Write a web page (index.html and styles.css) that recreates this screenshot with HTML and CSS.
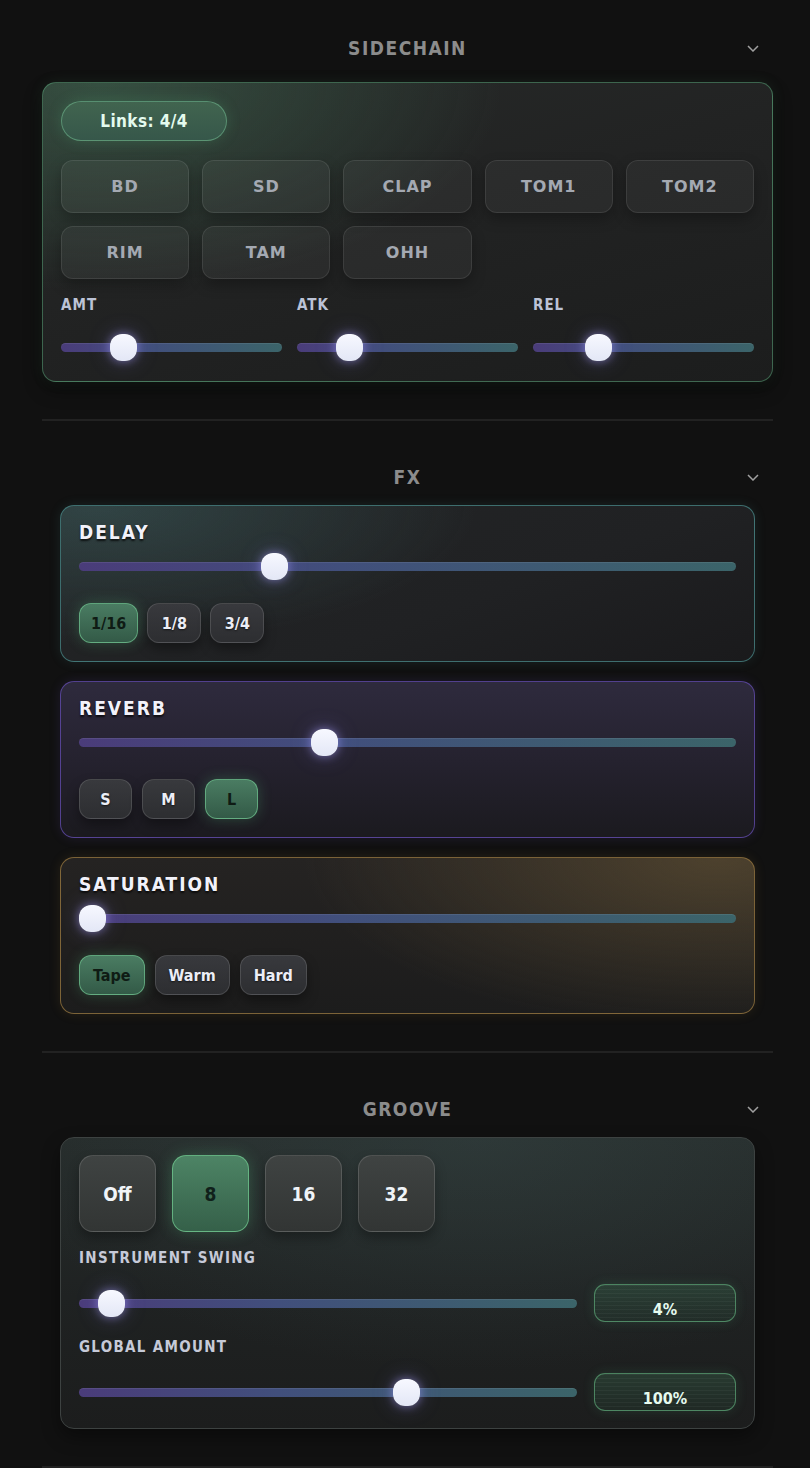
FILE: index.html
```html
<!DOCTYPE html>
<html>
<head>
<meta charset="utf-8">
<link rel="stylesheet" href="styles.css">
</head>
<body>
<div class="page">

  <section class="section first">
    <header class="sec-head">
      <span></span>
      <h2 class="sec-title">SIDECHAIN</h2>
      <svg class="chev" width="12" height="7" viewBox="0 0 12 7"><polyline points="1,1 6,6 11,1" fill="none" stroke="#a0a0a0" stroke-width="1.5"/></svg>
    </header>
    <div class="panel sidechain">
      <div class="links">Links: 4/4</div>
      <div class="pad-grid">
        <button class="pad">BD</button>
        <button class="pad">SD</button>
        <button class="pad">CLAP</button>
        <button class="pad">TOM1</button>
        <button class="pad">TOM2</button>
        <button class="pad">RIM</button>
        <button class="pad">TAM</button>
        <button class="pad">OHH</button>
      </div>
      <div class="sc-sliders">
        <div class="sc-col">
          <div class="lbl">AMT</div>
          <div class="slider sc"><div class="track"></div><div class="thumb" style="--v:0.25"></div></div>
        </div>
        <div class="sc-col">
          <div class="lbl">ATK</div>
          <div class="slider sc"><div class="track"></div><div class="thumb" style="--v:0.2"></div></div>
        </div>
        <div class="sc-col">
          <div class="lbl">REL</div>
          <div class="slider sc"><div class="track"></div><div class="thumb" style="--v:0.27"></div></div>
        </div>
      </div>
    </div>
  </section>

  <section class="section">
    <header class="sec-head">
      <span></span>
      <h2 class="sec-title">FX</h2>
      <svg class="chev" width="12" height="7" viewBox="0 0 12 7"><polyline points="1,1 6,6 11,1" fill="none" stroke="#a0a0a0" stroke-width="1.5"/></svg>
    </header>
    <div class="cards">
      <div class="card delay">
        <div class="card-title">DELAY</div>
        <div class="slider fx"><div class="track"></div><div class="thumb" style="--v:0.289"></div></div>
        <div class="opts">
          <button class="opt on">1/16</button>
          <button class="opt">1/8</button>
          <button class="opt">3/4</button>
        </div>
      </div>
      <div class="card reverb">
        <div class="card-title">REVERB</div>
        <div class="slider fx"><div class="track"></div><div class="thumb" style="--v:0.368"></div></div>
        <div class="opts">
          <button class="opt sq">S</button>
          <button class="opt sq">M</button>
          <button class="opt sq on">L</button>
        </div>
      </div>
      <div class="card saturation">
        <div class="card-title">SATURATION</div>
        <div class="slider fx"><div class="track"></div><div class="thumb" style="--v:0"></div></div>
        <div class="opts">
          <button class="opt on">Tape</button>
          <button class="opt">Warm</button>
          <button class="opt">Hard</button>
        </div>
      </div>
    </div>
  </section>

  <section class="section">
    <header class="sec-head">
      <span></span>
      <h2 class="sec-title">GROOVE</h2>
      <svg class="chev" width="12" height="7" viewBox="0 0 12 7"><polyline points="1,1 6,6 11,1" fill="none" stroke="#a0a0a0" stroke-width="1.5"/></svg>
    </header>
    <div class="cards">
      <div class="card groove">
        <div class="grid-btns">
          <button class="gbtn">Off</button>
          <button class="gbtn on">8</button>
          <button class="gbtn">16</button>
          <button class="gbtn">32</button>
        </div>
        <div class="glbl first-lbl">INSTRUMENT SWING</div>
        <div class="grow-row">
          <div class="slider gr"><div class="track"></div><div class="thumb" style="--v:0.04"></div></div>
          <div class="value">4%</div>
        </div>
        <div class="glbl">GLOBAL AMOUNT</div>
        <div class="grow-row">
          <div class="slider gr"><div class="track"></div><div class="thumb" style="--v:0.667"></div></div>
          <div class="value">100%</div>
        </div>
      </div>
    </div>
  </section>

</div>
</body>
</html>
```
FILE: styles.css
```css
* { box-sizing: border-box; }

body {
  margin: 0;
  background: #111111;
  font-family: "DejaVu Sans Condensed", "DejaVu Sans", sans-serif;
  font-stretch: condensed;
  color: #e8e8f0;
}

button {
  font-family: inherit;
  font-stretch: inherit;
  cursor: pointer;
  padding: 0;
}

.page {
  width: 731px;
  margin-left: 42px;
}

.section {
  border-bottom: 2px solid #222222;
  padding: 44px 0 37px;
}

.section.first {
  padding-top: 36px;
}

.sec-head {
  height: 24px;
  display: grid;
  grid-template-columns: 1fr auto 1fr;
  align-items: center;
  margin-bottom: 16px;
}

.section.first .sec-head {
  margin-bottom: 22px;
}

.sec-title {
  margin: 0;
  font-size: 19px;
  line-height: 24px;
  font-weight: 700;
  letter-spacing: 1.5px;
  color: #8c8c8c;
}

.chev {
  justify-self: end;
  margin-right: 14px;
}

/* ---------- panels ---------- */

.panel {
  border-radius: 14px;
  border: 1px solid rgba(88, 160, 118, 0.55);
}

.sidechain {
  padding: 18px 18px 20px;
  background:
    radial-gradient(ellipse 55% 70% at 8% 0%, rgba(78, 140, 104, 0.38), rgba(78, 140, 104, 0) 100%),
    linear-gradient(165deg, #272a29 0%, #222323 45%, #1c1d1d 100%);
  box-shadow: 0 0 14px rgba(70, 150, 100, 0.12), 0 8px 18px rgba(0, 0, 0, 0.4);
}

.links {
  width: 166px;
  height: 40px;
  border-radius: 20px;
  border: 1px solid rgba(110, 180, 140, 0.6);
  background: linear-gradient(180deg, #41644f 0%, #36574a 100%);
  box-shadow: 0 0 14px rgba(80, 170, 120, 0.25);
  display: flex;
  align-items: center;
  justify-content: center;
  font-size: 17px;
  font-weight: 700;
  color: #e4fbee;
  letter-spacing: 0.4px;
}

.pad-grid {
  margin-top: 19px;
  display: grid;
  grid-template-columns: repeat(5, 1fr);
  grid-auto-rows: 53px;
  gap: 13px;
}

.pad {
  border-radius: 12px;
  border: 1px solid rgba(255, 255, 255, 0.09);
  background: rgba(255, 255, 255, 0.045);
  box-shadow: 0 6px 14px rgba(0, 0, 0, 0.28);
  font-family: "DejaVu Sans", sans-serif;
  font-stretch: normal;
  font-weight: 700;
  font-size: 16px;
  letter-spacing: 1px;
  color: #a4a9b2;
}

.sc-sliders {
  margin-top: 18px;
  display: grid;
  grid-template-columns: repeat(3, 1fr);
  gap: 15px;
}

.lbl {
  font-size: 15px;
  line-height: 16px;
  font-weight: 700;
  letter-spacing: 1px;
  color: #bcc3d6;
}

.slider.sc {
  margin-top: 21px;
}

/* ---------- slider ---------- */

.slider {
  position: relative;
  height: 27px;
  display: flex;
  align-items: center;
}

.track {
  flex: 1;
  height: 9px;
  border-radius: 5px;
  background: linear-gradient(90deg, #4a3c7a 0%, #414f7c 40%, #3b6469 100%);
  box-shadow: inset 0 1px 0 rgba(255, 255, 255, 0.08);
}

.thumb {
  position: absolute;
  top: 0;
  left: calc(var(--v) * (100% - 27px));
  width: 27px;
  height: 27px;
  border-radius: 12px;
  background: linear-gradient(180deg, #f7f8ff 0%, #e3e7f6 100%);
  box-shadow: 0 0 10px rgba(170, 160, 255, 0.55), 0 0 22px rgba(150, 140, 255, 0.25);
}

/* ---------- FX cards ---------- */

.cards {
  padding: 0 18px;
  display: flex;
  flex-direction: column;
  gap: 19px;
}

.card {
  border-radius: 14px;
  border: 1px solid #3a3a3a;
  padding: 15px 18px 18px;
}

.delay {
  border-color: rgba(70, 130, 130, 0.8);
  background:
    radial-gradient(ellipse 55% 90% at 5% 0%, rgba(70, 115, 115, 0.4), rgba(70, 115, 115, 0) 100%),
    linear-gradient(160deg, #232526 0%, #202123 60%, #1a1a1c 100%);
  box-shadow: 0 0 12px rgba(70, 140, 140, 0.15);
}

.reverb {
  border-color: rgba(96, 74, 170, 0.8);
  background: linear-gradient(180deg, #2e2a3d 0%, #25222f 50%, #1b1a1f 100%);
  box-shadow: 0 0 12px rgba(110, 80, 200, 0.15);
}

.saturation {
  border-color: rgba(140, 110, 60, 0.85);
  background:
    radial-gradient(ellipse 60% 110% at 95% 0%, rgba(110, 90, 55, 0.55), rgba(110, 90, 55, 0) 100%),
    linear-gradient(180deg, #252322 0%, #1c1c1c 100%);
  box-shadow: 0 0 12px rgba(160, 120, 50, 0.15);
}

.card-title {
  font-size: 19px;
  line-height: 22px;
  font-weight: 700;
  letter-spacing: 2px;
  color: #f2f2fa;
  text-shadow: 0 2px 2px rgba(0, 0, 0, 0.7);
}

.slider.fx {
  margin-top: 10px;
}

.opts {
  margin-top: 23px;
  display: flex;
  gap: 10px;
}

.delay .opts {
  gap: 9px;
}

.opt {
  height: 40px;
  padding: 0 13px;
  border-radius: 12px;
  border: 1px solid rgba(255, 255, 255, 0.13);
  background: linear-gradient(180deg, #38393d 0%, #2d2e31 100%);
  box-shadow: 0 6px 12px rgba(0, 0, 0, 0.35);
  font-size: 16px;
  font-weight: 700;
  color: #eceef6;
  text-shadow: 0 1px 2px rgba(0, 0, 0, 0.6);
}

.delay .opt {
  padding: 0 11px;
  min-width: 54px;
}

.opt.sq {
  width: 53px;
  padding: 0;
}

.opt.on {
  border-color: rgba(110, 190, 140, 0.75);
  background: linear-gradient(180deg, #4a7c62 0%, #335a47 100%);
  box-shadow: 0 0 14px rgba(80, 180, 120, 0.3);
  color: #0f1b14;
  text-shadow: none;
}

/* ---------- groove ---------- */

.groove {
  padding: 17px 18px 17px;
  border-color: #3d4241;
  background:
    radial-gradient(ellipse 70% 80% at 60% 0%, rgba(60, 80, 80, 0.35), rgba(60, 80, 80, 0) 100%),
    linear-gradient(180deg, #262c2b 0%, #1f2222 55%, #1c1d1d 100%);
  box-shadow: 0 8px 18px rgba(0, 0, 0, 0.4);
}

.grid-btns {
  display: flex;
  gap: 16px;
}

.gbtn {
  width: 77px;
  height: 77px;
  border-radius: 14px;
  border: 1px solid rgba(255, 255, 255, 0.14);
  background: linear-gradient(180deg, #3f4342 0%, #323534 100%);
  box-shadow: 0 6px 12px rgba(0, 0, 0, 0.3);
  font-size: 19px;
  font-weight: 700;
  color: #f0f4f8;
}

.gbtn.on {
  border-color: rgba(110, 195, 140, 0.8);
  background: linear-gradient(180deg, #4d8465 0%, #356049 100%);
  box-shadow: 0 0 16px rgba(80, 180, 120, 0.3);
  color: #10201a;
}

.glbl {
  margin-top: 16px;
  font-size: 15px;
  line-height: 18px;
  font-weight: 700;
  letter-spacing: 1.3px;
  color: #c6cad8;
}

.glbl.first-lbl {
  margin-top: 17px;
}

.grow-row {
  margin-top: 17px;
  height: 38px;
  display: flex;
  align-items: center;
  gap: 17px;
}

.slider.gr {
  flex: 1;
}

.value {
  width: 142px;
  height: 38px;
  border-radius: 11px;
  border: 1px solid rgba(90, 160, 115, 0.75);
  background:
    repeating-linear-gradient(180deg, rgba(255, 255, 255, 0.04) 0 1px, rgba(255, 255, 255, 0) 1px 4px),
    linear-gradient(180deg, rgba(60, 110, 82, 0.35) 0%, rgba(40, 70, 55, 0.3) 100%);
  box-shadow: 0 0 12px rgba(80, 170, 120, 0.18);
  display: flex;
  align-items: flex-end;
  justify-content: center;
  padding-bottom: 2px;
  font-size: 16px;
  line-height: 18px;
  font-weight: 700;
  color: #e6fbef;
}
```
